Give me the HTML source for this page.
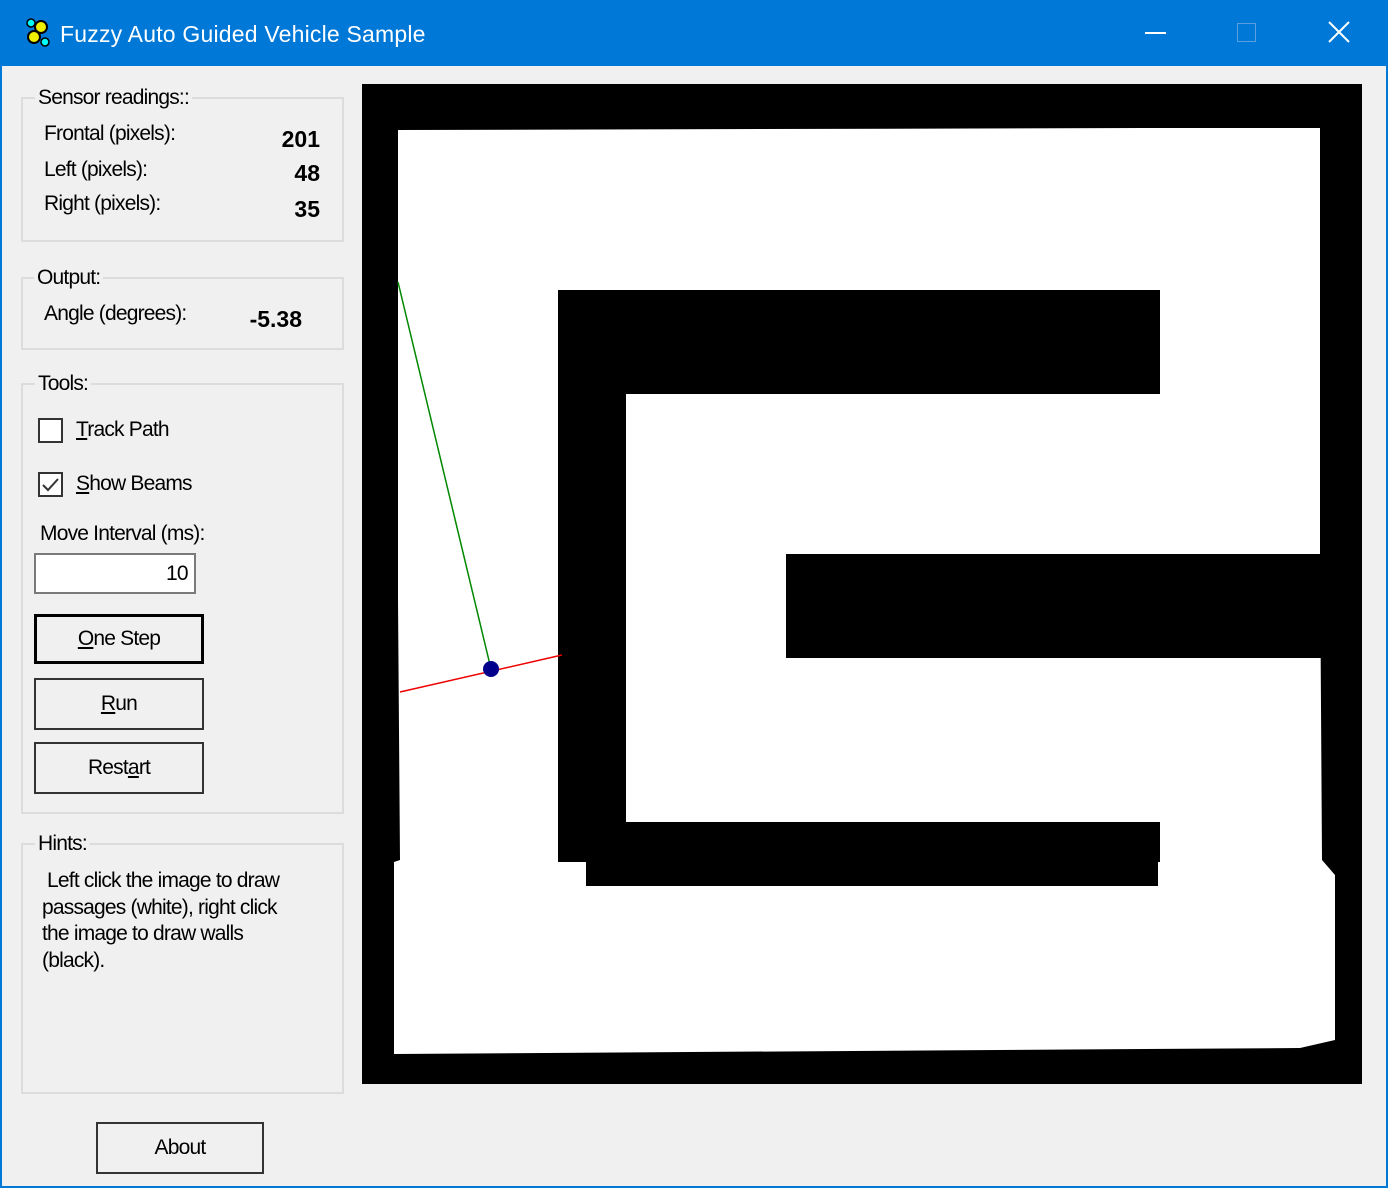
<!DOCTYPE html>
<html><head><style>
*{margin:0;padding:0;box-sizing:border-box}
body{width:1388px;height:1188px;background:#0078d7;font-family:"Liberation Sans",sans-serif;position:relative;overflow:hidden;color:#000}
.client{position:absolute;left:2px;top:66px;width:1384px;height:1120px;background:#f0f0f0}
.t{position:absolute;font-size:21px;white-space:nowrap;letter-spacing:-0.8px}
.gb{position:absolute;border:2px solid #dcdcdc}
.gl{position:absolute;background:#f0f0f0;padding:0 3px;font-size:21px;letter-spacing:-0.8px;white-space:nowrap}
.b{font-weight:bold;text-align:right}
.btn{position:absolute;border:2px solid #333;background:#f0f0f0;font-size:21px;letter-spacing:-0.8px;display:flex;align-items:center;justify-content:center}
.cb{position:absolute;width:25px;height:25px;border:2px solid #333;background:#fff}
u{text-decoration:underline}
</style></head><body>
<svg style="position:absolute;left:26px;top:18px" width="26" height="30" viewBox="0 0 26 30">
<circle cx="5" cy="5" r="4" fill="#0ff" stroke="#000" stroke-width="1.5"/>
<circle cx="15" cy="9" r="6" fill="#ee0" stroke="#000" stroke-width="2"/>
<circle cx="8" cy="19" r="6" fill="#ee0" stroke="#000" stroke-width="2"/>
<circle cx="19" cy="24" r="4" fill="#0ff" stroke="#000" stroke-width="1.5"/>
</svg>
<div class="t" style="left:60px;top:21px;color:#fff;font-size:23px;letter-spacing:0.2px">Fuzzy Auto Guided Vehicle Sample</div>
<div style="position:absolute;left:1145px;top:32px;width:21px;height:1.5px;background:#fff"></div>
<div style="position:absolute;left:1237px;top:23px;width:19px;height:19px;border:1.5px solid #5aa0e0"></div>
<svg style="position:absolute;left:1328px;top:21px" width="22" height="22"><path d="M1 1L21 21M21 1L1 21" stroke="#fff" stroke-width="2"/></svg>
<div class="client"></div>

<div class="gb" style="left:21px;top:97px;width:323px;height:145px"></div>
<div class="gl" style="left:35px;top:86px">Sensor readings::</div>
<div class="t" style="left:44px;top:122px">Frontal (pixels):</div>
<div class="t" style="left:44px;top:158px">Left (pixels):</div>
<div class="t" style="left:44px;top:192px">Right (pixels):</div>
<div class="t b" style="left:240px;width:80px;top:126px;font-size:23px;letter-spacing:0">201</div>
<div class="t b" style="left:240px;width:80px;top:160px;font-size:23px;letter-spacing:0">48</div>
<div class="t b" style="left:240px;width:80px;top:196px;font-size:23px;letter-spacing:0">35</div>

<div class="gb" style="left:21px;top:277px;width:323px;height:73px"></div>
<div class="gl" style="left:34px;top:266px">Output:</div>
<div class="t" style="left:44px;top:302px">Angle (degrees):</div>
<div class="t b" style="left:220px;width:82px;top:306px;font-size:23px;letter-spacing:0">-5.38</div>

<div class="gb" style="left:21px;top:383px;width:323px;height:431px"></div>
<div class="gl" style="left:35px;top:372px">Tools:</div>
<div class="cb" style="left:38px;top:418px"></div>
<div class="t" style="left:76px;top:418px"><u>T</u>rack Path</div>
<div class="cb" style="left:38px;top:472px"><svg width="21" height="21" style="position:absolute;left:0;top:0"><path d="M3 11L8 16L18 5" stroke="#333" stroke-width="2" fill="none"/></svg></div>
<div class="t" style="left:76px;top:472px"><u>S</u>how Beams</div>
<div class="t" style="left:40px;top:522px">Move Interval (ms):</div>
<div style="position:absolute;left:34px;top:553px;width:162px;height:41px;border:2px solid #7a7a7a;background:#fff"></div>
<div class="t" style="left:166px;top:562px">10</div>
<div class="btn" style="left:34px;top:614px;width:170px;height:50px;border:3px solid #000"><span><u>O</u>ne Step</span></div>
<div class="btn" style="left:34px;top:678px;width:170px;height:52px"><span><u>R</u>un</span></div>
<div class="btn" style="left:34px;top:742px;width:170px;height:52px"><span>Rest<u>a</u>rt</span></div>

<div class="gb" style="left:21px;top:843px;width:323px;height:251px"></div>
<div class="gl" style="left:35px;top:832px">Hints:</div>
<div class="t" style="left:42px;top:868px;line-height:26.5px">&nbsp;Left click the image to draw<br>passages (white), right click<br>the image to draw walls<br>(black).</div>

<div class="btn" style="left:96px;top:1122px;width:168px;height:52px"><span>About</span></div>

<svg style="position:absolute;left:362px;top:84px" width="1000" height="1000" viewBox="362 84 1000 1000">
<rect x="362" y="84" width="1000" height="1000" fill="#000"/>
<polygon fill="#fff" points="398,130 1160,128 1320,128 1320,554 1322,860 1335,875 1335,1040 1300,1048 394,1054 394,862 400,860 398,600"/>
<rect x="558" y="290" width="602" height="104"/>
<rect x="558" y="290" width="68" height="572"/>
<rect x="560" y="822" width="600" height="40"/>
<rect x="586" y="822" width="572" height="64"/>
<rect x="786" y="554" width="576" height="104"/>
<line x1="491" y1="669" x2="398" y2="282" stroke="#080" stroke-width="1.5"/>
<line x1="400" y1="692" x2="562" y2="655" stroke="#e00" stroke-width="1.5"/>
<circle cx="491" cy="669" r="8" fill="#00008b"/>
</svg>
</body></html>
